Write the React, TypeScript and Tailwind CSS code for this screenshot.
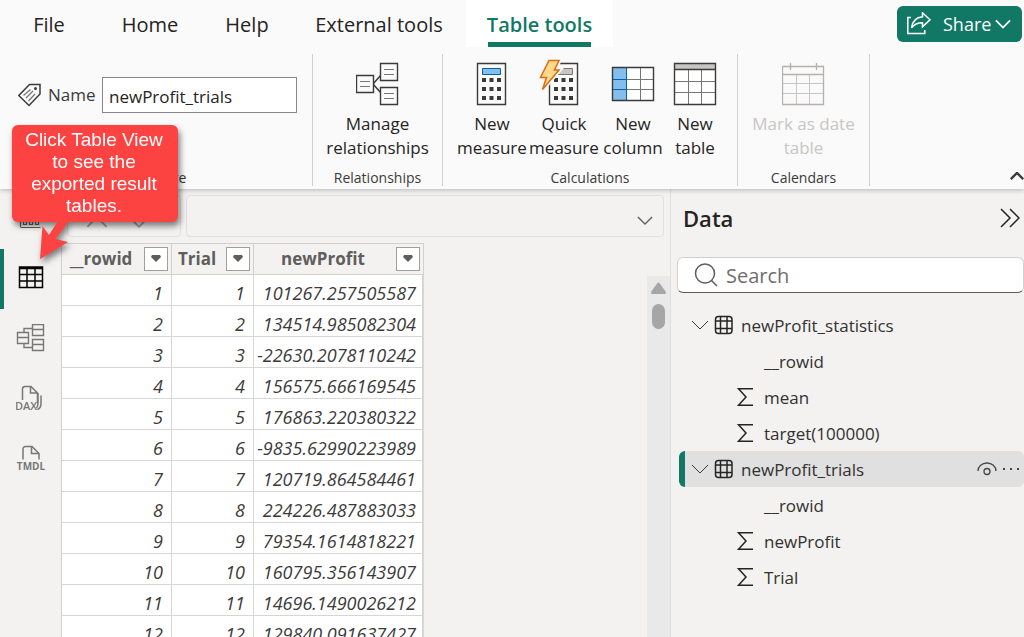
import type { ReactNode } from 'react'

const rows = [
  '101267.257505587',
  '134514.985082304',
  '-22630.2078110242',
  '156575.666169545',
  '176863.220380322',
  '-9835.62990223989',
  '120719.864584461',
  '224226.487883033',
  '79354.1614818221',
  '160795.356143907',
  '14696.1490026212',
  '129840.091637427',
]

const tables = [
  {
    name: 'newProfit_statistics',
    selected: false,
    fields: [
      { name: '__rowid', sum: false },
      { name: 'mean', sum: true },
      { name: 'target(100000)', sum: true },
    ],
  },
  {
    name: 'newProfit_trials',
    selected: true,
    fields: [
      { name: '__rowid', sum: false },
      { name: 'newProfit', sum: true },
      { name: 'Trial', sum: true },
    ],
  },
]

function Chevron({ className }: { className: string }) {
  return (
    <svg className={className} viewBox="0 0 18 10" fill="none" stroke="currentColor">
      <path d="M1 1l8 8 8-8" />
    </svg>
  )
}

function TagIcon() {
  return (
    <svg width="24" height="24" viewBox="0 0 24 24" fill="none" stroke="#3b3a39">
      <path d="M11.500 1.500H22v9.500L11 22.500.800 12.500z" strokeWidth="1.500" />
      <circle cx="17.500" cy="5.500" r="1.500" fill="#3b3a39" stroke="none" />
      <path d="M5.500 12.500l7-6M8 15l7-7M10.500 18l6.500-7" stroke="#797775" strokeWidth="1.300" />
    </svg>
  )
}

function RelationshipsIcon() {
  return (
    <svg width="44" height="44" viewBox="1 0 44 44" fill="#fafafa" stroke="#3b3a39" strokeWidth="1.400">
      <path d="M18 22l8-9M18 22l8 9" strokeWidth="1.500" />
      <path d="M1.500 13.500h17v17h-17zM25.500 1.500h17v17h-17zM25.500 25.500h17v17h-17z" />
      <path d="M5 19.500h10M5 24.500h10M29 7.500h10M29 12.500h10M29 31.500h10M29 36.500h10" stroke="#797775" strokeWidth="1" />
    </svg>
  )
}

function CalculatorShape({ screen, screenLine }: { screen: string; screenLine: string }) {
  return (
    <>
      <path d="M8.500 1.500h28v41h-28z" fill="#fafafa" stroke="#3b3a39" strokeWidth="1.400" />
      <path d="M13.500 6.500h18v6h-18z" fill={screen} stroke={screenLine} />
      <path
        d="M13 16h4v4h-4zM20.500 16h4v4h-4zM28 16h4v4h-4zM13 25h4v4h-4zM20.500 25h4v4h-4zM28 25h4v4h-4zM13 34h4v4h-4zM20.500 34h4v4h-4zM28 34h4v4h-4z"
        fill="#3b3a39"
      />
    </>
  )
}

function MeasureIcon() {
  return (
    <svg width="44" height="44" viewBox="1 0 44 44">
      <CalculatorShape screen="#83beec" screenLine="#0063b1" />
    </svg>
  )
}

function QuickMeasureIcon() {
  return (
    <svg width="44" height="44" viewBox="1 0 44 44" className="overflow-visible">
      <CalculatorShape screen="#c8c6c4" screenLine="#797775" />
      <path
        d="M8-1.500h10l-4.500 9.500h4.500L1.500 27.500l4-12h-6z"
        fill="#fafafa"
        stroke="#fafafa"
        strokeWidth="5"
      />
      <path
        d="M8-1.500h10l-4.500 9.500h4.500L1.500 27.500l4-12h-6z"
        fill="#ffd98a"
        stroke="#dd6b10"
        strokeWidth="1.500"
      />
    </svg>
  )
}

function ColumnIcon() {
  return (
    <svg width="44" height="44" viewBox="0 0 44 44" fill="none">
      <path d="M1.500 5.500h41v33h-41z" fill="#fff" />
      <path d="M2 6h13.500v32H2z" fill="#83beec" />
      <path d="M15 17.500h28M15 27.500h28M29.500 6v33" stroke="#797775" />
      <path d="M2 17.500h13.500M2 27.500h13.500M15.500 6v33" stroke="#0063b1" />
      <path d="M1.500 5.500h41v33h-41z" stroke="#3b3a39" strokeWidth="1.400" />
    </svg>
  )
}

function TableIcon() {
  return (
    <svg width="44" height="44" viewBox="0 0 44 44" fill="none">
      <path d="M1.500 1.500h41v41h-41z" fill="#fff" />
      <path d="M1.500 1.500h41v6h-41z" fill="#c8c6c4" />
      <path d="M2 19.500h40M2 30.500h40M15.500 8v34M28.500 8v34" stroke="#797775" />
      <path d="M1.500 1.500h41v41h-41zM1.500 7.500h41" stroke="#3b3a39" strokeWidth="1.400" />
    </svg>
  )
}

function CalendarIcon() {
  return (
    <svg width="44" height="44" viewBox="1 0 44 44" fill="none" stroke="#c8c6c4">
      <path d="M2 21.500h40M2 31.500h40M15.500 12v30M28.500 12v30" />
      <path d="M1.500 4.500h41v38h-41zM1.500 12.500h41M9.500 1v7M35.500 1v7" stroke="#b3b0ad" strokeWidth="1.300" />
    </svg>
  )
}

function ReportViewIcon() {
  return (
    <svg width="30" height="30" viewBox="1 0 30 30" fill="none" stroke="#605e5c" strokeWidth="1.200">
      <path d="M5.500 23.500h20M5.500 5v18M8.500 12.500h3v8h-3zM14.500 8.500h3v12h-3zM20.500 10.500h3v10h-3z" />
    </svg>
  )
}

function TableViewIcon() {
  return (
    <svg width="30" height="30" viewBox="0 0 30 30" fill="none" stroke="#000" strokeWidth="1.500">
      <path d="M3.500 3h23v20.500h-23zM3.500 4.500h23M3.500 10.500h23M3.500 17h23M11 5v18M19 5v18" />
    </svg>
  )
}

function ModelViewIcon() {
  return (
    <svg width="30" height="30" viewBox="1 1 30 30" fill="none" stroke="#797775" strokeWidth="1.400">
      <path d="M2.500 9.500h11v11h-11zM2.500 14.500h11M17.500 1.500h11v11h-11zM17.500 6.500h11M17.500 16.500h11v11h-11zM17.500 21.500h11" />
      <path d="M9 9.500v-4h8.500M9 20.500v4h8.500" />
    </svg>
  )
}

function DaxViewIcon() {
  return (
    <svg width="30" height="30" viewBox="1 0 30 30" fill="none" stroke="#797775" strokeWidth="1.500">
      <path d="M7.500 16V5A2.500 2.500 0 0 1 10 2.500H16l6.500 6.500V19M15.500 3v6H22M23 9v10q0 3-1.500 5M26 11.500v8q0 4.500-3.500 6" />
      <text x="0" y="26" fontSize="11" fontWeight="600" fill="#797775" stroke="none">DAX</text>
    </svg>
  )
}

function TmdlViewIcon() {
  return (
    <svg width="30" height="30" viewBox="0 0 30 30" fill="none" stroke="#797775" strokeWidth="1.500">
      <path d="M7 15.500V5a2.500 2.500 0 0 1 2.500-2.500H16l7 7v6M15.500 3v6.500H23" />
      <text x="15" y="26" textAnchor="middle" fontSize="10" fontWeight="700" fill="#797775" stroke="none">TMDL</text>
    </svg>
  )
}

function FieldTableIcon() {
  return (
    <svg width="20" height="20" viewBox="0 0 20 20" fill="none" stroke="#252423" strokeWidth="1.500">
      <rect x="1.500" y="1.500" width="16.500" height="17" rx="3" />
      <path d="M1.500 6h16.500M1.500 13.500h16.500M6.500 1.500v17M13 1.500v17" />
    </svg>
  )
}

function SigmaIcon() {
  return (
    <svg width="18" height="20" viewBox="0 0 18 20" fill="none" stroke="#252423" strokeWidth="1.500">
      <path d="M17 1.700H2.500L10 10l-7.500 8.300H17" />
    </svg>
  )
}

function Tab({ className, children }: { className: string; children: ReactNode }) {
  return (
    <button className={`flex h-[47px] shrink-0 items-center justify-center whitespace-nowrap pt-0.5 text-[20px] ${className}`}>
      {children}
    </button>
  )
}

function Group({ title, className, children }: { title: string; className: string; children: ReactNode }) {
  return (
    <div className={`flex h-[132px] shrink-0 flex-col justify-between border-r border-[#d2d0ce] ${className}`}>
      <div className="flex">{children}</div>
      <p className="text-center text-[14px] leading-4 text-[#3b3a39]">{title}</p>
    </div>
  )
}

function Tool({ icon, top, bottom, className, disabled }: { icon: ReactNode; top: string; bottom: string; className: string; disabled?: boolean }) {
  return (
    <button disabled={disabled} className={`flex flex-col items-center pt-2 text-[17px] leading-6 whitespace-nowrap disabled:text-[#c8c6c4] ${className}`}>
      {icon}
      <span className="mt-1.5">{top}</span>
      <span>{bottom}</span>
    </button>
  )
}

function ViewButton({ label, active, children }: { label: string; active?: boolean; children: ReactNode }) {
  return (
    <button
      aria-label={label}
      className={`flex h-[60px] items-center justify-center border-l-4 pr-1 ${active ? 'border-[#117865]' : 'border-transparent'}`}
    >
      {children}
    </button>
  )
}

function HeaderCell({ children, className }: { children: string; className: string }) {
  return (
    <th className={`h-8 border-t border-r border-b border-[#d2d0ce] p-0 ${className}`}>
      <div className="flex items-center pr-[3px]">
        <span className="flex-1 pr-1 text-center">{children}</span>
        <button aria-label={`Filter ${children}`} className="flex size-6 items-center justify-center border border-[#a19f9d] bg-white">
          <svg width="10" height="8" viewBox="0 0 10 8" fill="#605e5c">
            <path d="M1 0h8l1 2-5 5-5-5z" />
          </svg>
        </button>
      </div>
    </th>
  )
}

export default function App() {
  return (
    <div className="relative flex h-screen flex-col overflow-hidden bg-[#f3f2f1] font-['Open_Sans','Noto_Sans',sans-serif] text-[#252423]">
      <header className="z-10 shrink-0 bg-[#fafafa] pb-[3px] shadow-[0_1px_5px_rgba(0,0,0,0.25)]">
        <div className="flex h-[54px] items-start justify-between">
          <nav className="flex">
            <Tab className="w-[98px]">File</Tab>
            <Tab className="w-[104px]">Home</Tab>
            <Tab className="w-[90px]">Help</Tab>
            <Tab className="w-[174px]">External tools</Tab>
            <Tab className="relative w-[147px] bg-white font-semibold text-[#117865] after:absolute after:inset-x-[22px] after:bottom-0 after:h-[5px] after:bg-[#117865]">
              Table tools
            </Tab>
          </nav>
          <button className="mt-1.5 mr-0.5 flex h-9 w-[125px] items-center rounded-md bg-[#117865] pl-2.5 text-[18px] text-white">
            <svg width="24" height="24" viewBox="0 0 24 24" fill="none" stroke="#fff" strokeWidth="1.500">
              <path d="M4 5.500H.800v16h17V18" />
              <path d="M15.500.800l7.500 7-7.500 7v-4c-5 0-8 1-11 5 1-6.500 4.500-10.500 11-11z" />
            </svg>
            <span className="ml-3">Share</span>
            <Chevron className="ml-1 h-2.5 w-4 stroke-2" />
          </button>
        </div>

        <div className="flex items-end">
          <Group title="Structure" className="w-[313px]">
            <label className="mt-[23px] flex flex-1 items-center pr-[15px] pl-[18px] text-[17px] text-[#3b3a39]">
              <TagIcon />
              <span className="ml-1.5 w-[54px]">Name</span>
              <input
                defaultValue="newProfit_trials"
                className="h-9 w-0 flex-1 border border-[#8a8886] bg-white px-1.5 pt-0.5 text-[17px] text-[#252423] outline-none"
              />
            </label>
          </Group>
          <Group title="Relationships" className="w-[130px]">
            <Tool className="flex-1" icon={<RelationshipsIcon />} top="Manage" bottom="relationships" />
          </Group>
          <Group title="Calculations" className="w-[295px] px-[13px]">
            <Tool className="w-[72px]" icon={<MeasureIcon />} top="New" bottom="measure" />
            <Tool className="w-[72px]" icon={<QuickMeasureIcon />} top="Quick" bottom="measure" />
            <Tool className="w-[66px]" icon={<ColumnIcon />} top="New" bottom="column" />
            <Tool className="w-[58px]" icon={<TableIcon />} top="New" bottom="table" />
          </Group>
          <Group title="Calendars" className="w-[132px]">
            <Tool className="flex-1" icon={<CalendarIcon />} top="Mark as date" bottom="table" disabled />
          </Group>
          <button aria-label="Collapse ribbon" className="mb-1.5 ml-auto">
            <Chevron className="h-2 w-[14px] rotate-180 stroke-3 text-[#3b3a39]" />
          </button>
        </div>
      </header>

      <div className="flex min-h-0 flex-1">
        <nav className="flex w-[61px] shrink-0 flex-col">
          <ViewButton label="Report view"><ReportViewIcon /></ViewButton>
          <ViewButton label="Table view" active><TableViewIcon /></ViewButton>
          <ViewButton label="Model view"><ModelViewIcon /></ViewButton>
          <ViewButton label="DAX query view"><DaxViewIcon /></ViewButton>
          <ViewButton label="TMDL view"><TmdlViewIcon /></ViewButton>
        </nav>

        <main className="flex min-w-0 flex-1 flex-col">
          <div className="flex gap-[5px] pt-1.5 pr-1.5 pl-1.5">
            <div className="flex h-[42px] w-[114px] items-center gap-5 rounded-sm border border-[#e1dfdd] pt-3 pl-[18px] text-[#a19f9d]">
              <Chevron className="h-3 w-[22px] rotate-180 stroke-[1.5]" />
              <Chevron className="h-3 w-[22px] stroke-[1.5]" />
            </div>
            <div className="flex h-[42px] flex-1 items-center justify-end rounded-sm border border-[#e1dfdd] pt-2 pr-2.5 text-[#605e5c]">
              <Chevron className="h-[9px] w-4 stroke-[1.5]" />
            </div>
          </div>

          <div className="mt-1.5 flex min-h-0 flex-1 justify-between">
            <div className="overflow-hidden">
              <table className="w-[363px] table-fixed border-separate border-spacing-0 border-l border-[#d2d0ce] text-[17px]">
                <thead className="text-[#605e5c]">
                  <tr>
                    <HeaderCell className="w-[110px]">__rowid</HeaderCell>
                    <HeaderCell className="w-[82px]">Trial</HeaderCell>
                    <HeaderCell className="w-[170px]">newProfit</HeaderCell>
                  </tr>
                </thead>
                <tbody className="bg-white text-right text-[18px] text-[#3b3a39] italic">
                  {rows.map((value, i) => (
                    <tr key={value}>
                      <td className="h-[31px] border-r border-b border-[#d8d6d4] pt-1.5 pr-2 leading-6">{i + 1}</td>
                      <td className="h-[31px] border-r border-b border-[#d8d6d4] pt-1.5 pr-2 leading-6">{i + 1}</td>
                      <td className="h-[31px] border-r-2 border-b border-[#d8d6d4] pt-1.5 pr-1.5 leading-6">{value}</td>
                    </tr>
                  ))}
                </tbody>
              </table>
            </div>
            <div className="mt-[33px] flex w-[23px] flex-col items-center bg-[#e9e9e9] pt-1.5">
              <svg width="15" height="12" viewBox="0 0 15 12" fill="#a6a6a6">
                <path d="M6.500 1q1-1 2 0L15 10q0 2-1 2H1q-1 0-1-2z" />
              </svg>
              <div className="mt-2.5 h-[25px] w-[13px] rounded-full bg-[#a6a6a6]" />
            </div>
          </div>
        </main>

        <aside className="w-[354px] shrink-0 border-l border-[#e1dfdd]">
          <div className="flex h-[68px] items-center justify-between pr-1 pb-2.5 pl-3">
            <h2 className="text-[22px] font-semibold">Data</h2>
            <button aria-label="Collapse pane">
              <svg width="20" height="20" viewBox="0 0 20 20" fill="none" stroke="#252423" strokeWidth="1.500">
                <path d="M1 1l9 9-9 9M10 1l9 9-9 9" />
              </svg>
            </button>
          </div>
          <label className="ml-1.5 flex h-9 items-center rounded-md border border-[#d2d0ce] border-b-[#605e5c] bg-white pl-4">
            <svg width="24" height="24" viewBox="0 0 24 24" fill="none" stroke="#605e5c" strokeWidth="1.500">
              <circle cx="11" cy="10.500" r="9.500" />
              <path d="M17.500 17.500l5.500 5.500" />
            </svg>
            <input
              type="search"
              aria-label="Search"
              placeholder="Search"
              className="ml-2 w-0 flex-1 bg-transparent pt-0.5 text-[20px] outline-none placeholder:text-[#706e6c]"
            />
          </label>
          <ul className="mt-3.5 ml-2 text-[17px] leading-9 text-[#323130]">
            {tables.map((table) => (
              <li key={table.name}>
                <div
                  className={`flex h-9 items-center rounded-md border-l-[6px] pr-1 pl-1.5 ${table.selected ? 'border-[#117865] bg-[#e0e0e0]' : 'border-transparent'}`}
                >
                  <button aria-label={`Toggle ${table.name}`}>
                    <Chevron className="h-2.5 w-[18px] text-[#3b3a39]" />
                  </button>
                  <span className="ml-[5px]"><FieldTableIcon /></span>
                  <span className="ml-[7px] flex-1 pt-0.5">{table.name}</span>
                  {table.selected && (
                    <>
                      <button aria-label="Hide table">
                        <svg width="20" height="14" viewBox="0 0 20 14" fill="none" stroke="#484644" strokeWidth="1.300">
                          <path d="M1 9a9 8 0 0 1 18 0" />
                          <circle cx="10" cy="9.500" r="3" />
                        </svg>
                      </button>
                      <button aria-label="More options" className="ml-[5px]">
                        <svg width="18" height="4" viewBox="0 0 18 4" fill="#484644">
                          <path d="M1 1h2v2H1zM8 1h2v2H8zM15 1h2v2h-2z" />
                        </svg>
                      </button>
                    </>
                  )}
                </div>
                <ul>
                  {table.fields.map((field) => (
                    <li key={field.name} className="flex h-9 items-center pl-[57px]">
                      <span className="mr-2.5 w-[18px]">{field.sum && <SigmaIcon />}</span>
                      <span className="pt-0.5">{field.name}</span>
                    </li>
                  ))}
                </ul>
              </li>
            ))}
          </ul>
        </aside>
      </div>

      {/* tip that points at the Table view button */}
      <div className="absolute top-[125px] left-3 z-20 w-[166px] rounded-md bg-[#fd4242] pt-1 pr-2.5 pb-[5px] pl-2 text-center font-['Liberation_Sans',Arial,sans-serif] text-[19px] leading-[22px] text-white drop-shadow-[2px_4px_3px_rgba(0,0,0,0.5)]">
        Click Table View to see the exported result tables.
        <svg className="absolute top-full left-6 -mt-px" width="36" height="40" viewBox="0 0 36 40" fill="#fd4242">
          <path d="M22 0l-9 14-6.500-9L4 38l28-17-12.500-3L33 0z" />
        </svg>
      </div>
    </div>
  )
}
